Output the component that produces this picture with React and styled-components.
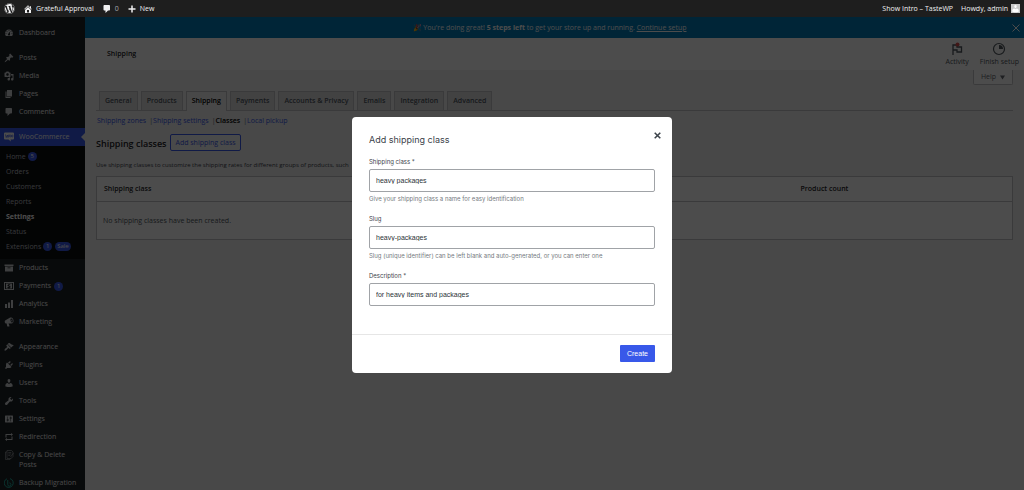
import React from 'react';
import styled, { createGlobalStyle } from 'styled-components';
import { FaWordpress } from 'react-icons/fa';

const GlobalStyle = createGlobalStyle`
  *, *::before, *::after { box-sizing: border-box; }
  body {
    margin: 0;
    overflow: hidden;
    background: #f0f0f1;
    color: #1d2327;
    font: 7px/10px "Open Sans", "Noto Sans", sans-serif;
  }
  button, input { font: inherit; margin: 0; }
  a { color: inherit; text-decoration: none; }
  h1, h2, p, ul { margin: 0; padding: 0; }
  ul { list-style: none; }
`;

const PATHS = {
  dashboard: 'M3.76 16h12.48c1.1-1.37 1.76-3.11 1.76-5 0-4.42-3.58-8-8-8s-8 3.58-8 8c0 1.89.66 3.63 1.76 5zM10 4c.55 0 1 .45 1 1s-.45 1-1 1-1-.45-1-1 .45-1 1-1zM6 6c.55 0 1 .45 1 1s-.45 1-1 1-1-.45-1-1 .45-1 1-1zm8 0c.55 0 1 .45 1 1s-.45 1-1 1-1-.45-1-1 .45-1 1-1zm-5.37 5.55L12 7v6c0 1.1-.9 2-2 2s-2-.9-2-2c0-.57.24-1.08.63-1.45zM4 10c.55 0 1 .45 1 1s-.45 1-1 1-1-.45-1-1 .45-1 1-1zm12 0c.55 0 1 .45 1 1s-.45 1-1 1-1-.45-1-1 .45-1 1-1z',
  pin: 'M10.44 3.02l1.82-1.82 6.36 6.35-1.83 1.82c-1.05-.68-2.48-.57-3.41.36l-.75.75c-.92.93-1.04 2.35-.35 3.41l-1.83 1.82-2.41-2.41-2.8 2.79c-.42.42-3.38 2.71-3.8 2.29s1.86-3.39 2.28-3.81l2.79-2.79L4.1 9.36l1.83-1.82c1.05.69 2.48.57 3.4-.36l.75-.75c.93-.92 1.05-2.35.36-3.41z',
  media: 'M13 11V4c0-.55-.45-1-1-1h-1.67L9 1H5L3.67 3H2c-.55 0-1 .45-1 1v7c0 .55.45 1 1 1h10c.55 0 1-.45 1-1zM7 4.5c1.38 0 2.5 1.12 2.5 2.5S8.38 9.5 7 9.5 4.5 8.38 4.5 7 5.62 4.5 7 4.5zM14 6h5v10.5c0 1.38-1.12 2.5-2.5 2.5S14 17.88 14 16.5s1.12-2.5 2.5-2.5c.17 0 .34.02.5.05V9h-3V6zm-4 8.05V13h2v3.5c0 1.38-1.12 2.5-2.5 2.5S7 17.88 7 16.5 8.12 14 9.5 14c.17 0 .34.02.5.05z',
  page: 'M6 15V2h10v13H6zm-1 1h8v2H3V5h2v11z',
  comment: 'M5 2h9c1.1 0 2 .9 2 2v7c0 1.1-.9 2-2 2h-2l-5 5v-5H5c-1.1 0-2-.9-2-2V4c0-1.1.9-2 2-2z',
  archive: 'M19 3v3H1V3h18zM2 7h16v10H2V7zm11 3.500V9H7v1.500h6z',
  payments: 'M0 2h20v16H0V2zm2 2v12h16V4H2zM4 5h12v10H4V5zm5 1v1c-3 .5-3 3.500 0 4 1.500.3 1.500 1.200 0 1.200H7V14h2v.8h2V14c3-.5 3-3.600 0-4-1.500-.3-1.500-1.300 0-1.300h1.500V7H11V6H9z',
  bars: 'M18 18V2h-4v16h4zm-6 0V7H8v11h4zm-6 0v-8H2v8h4z',
  megaphone: 'M14 1c3 0 5 3 5 6.500S17.500 13 15 13H9l2 5c0 .5-.3.800-.7.800H7c-.4 0-.6-.3-.7-.7L5.400 13C2.800 13.300 1.500 11 1.500 9.300S2.200 7 3 6.500l8.500-5C12.300 1.100 13 1 14 1zm1 1.800c-2 .2-2.400 2.500-1.800 4.600S15.500 11.500 16.500 11c1.300-.6 1.500-2.600 1-4.600S16 2.700 15 2.800zm-.6 2.700c.9-.2 1.800.5 2 1.400.3.900-.1 1.800-1 2z',
  brush: 'M14.48 11.06L7.41 3.99l1.5-1.5c.5-.56 2.3-.47 3.51.32 1.21.8 1.43 1.28 2.91 2.1 1.18.64 2.45 1.26 4.45.85zm-.71.71L6.7 4.7 4.93 6.47c-.39.39-.39 1.02 0 1.41l1.06 1.06c.39.39.39 1.03 0 1.42-.6.6-1.43 1.11-2.21 1.69-.35.26-.7.53-1.01.84C1.43 14.23.4 16.08 1.4 17.07c.99 1 2.84-.03 4.18-1.36.31-.31.58-.66.85-1.02.57-.78 1.08-1.61 1.69-2.21.39-.39 1.02-.39 1.41 0l1.06 1.06c.39.39 1.02.39 1.41 0z',
  plug: 'M13.11 4.36L9.87 7.6 8 5.73l3.24-3.24c.35-.34 1.05-.2 1.56.32.52.51.66 1.21.31 1.55zm-8 1.77l.91-1.12 9.01 9.01-1.19.84c-.71.71-2.63 1.16-3.82 1.16H6.14L4.9 17.26c-.59.59-1.54.59-2.12 0-.59-.58-.59-1.53 0-2.12l1.24-1.24v-3.88c0-1.13.4-3.19 1.09-3.89zm7.26 3.97l3.24-3.24c.34-.35 1.04-.21 1.55.31.52.51.66 1.21.31 1.55l-3.24 3.25z',
  user: 'M10 9.25c-2.27 0-2.73-3.44-2.73-3.44C7 4.02 7.82 2 9.97 2c2.16 0 2.98 2.02 2.71 3.81 0 0-.41 3.44-2.68 3.44zm0 2.57L12.72 10c2.39 0 4.52 2.33 4.52 4.53v2.49s-3.65 1.13-7.24 1.13c-3.65 0-7.24-1.13-7.24-1.13v-2.49c0-2.25 1.94-4.48 4.47-4.48z',
  wrench: 'M16.68 9.77c-1.34 1.34-3.3 1.67-4.95.99l-5.41 6.52c-.99.99-2.59.99-3.58 0s-.99-2.59 0-3.57l6.52-5.42c-.68-1.65-.35-3.61.99-4.95 1.28-1.28 3.12-1.62 4.72-1.06l-2.89 2.89 2.82 2.82 2.86-2.87c.53 1.58.18 3.39-1.08 4.65z',
  sliders: 'M18 16V4c0-.55-.45-1-1-1H3c-.55 0-1 .45-1 1v12c0 .55.45 1 1 1h14c.55 0 1-.45 1-1zM8 11h1c.55 0 1 .45 1 1s-.45 1-1 1H8v1.500c0 .28-.22.500-.5.500s-.5-.22-.5-.5V13H6c-.55 0-1-.45-1-1s.45-1 1-1h1V5.500c0-.28.22-.5.500-.5s.5.220.5.500V11zm5-2h-1c-.55 0-1-.45-1-1s.45-1 1-1h1V5.500c0-.28.22-.5.500-.5s.5.220.5.500V7h1c.55 0 1 .45 1 1s-.45 1-1 1h-1v5.500c0 .28-.22.500-.5.500s-.5-.22-.5-.5V9z',
  loop: 'M5 4h9V2l4 3-4 3V6H5v5H3V4h2zm12 12H6v2l-4-3 4-3v2h9V9h2v7z',
  home: 'M16 8.5l1.53 1.53-1.06 1.06L10 4.6l-6.47 6.49-1.06-1.06L10 2.5l4 4v-2h2v4zm-6-2.46l6 5.99V18H4v-5.97zM12 17v-5H8v5h4z',
  plus: 'M17 8.5v3h-5.500V17h-3v-5.500H3v-3h5.500V3h3v5.500H17z',
};

const Svg = styled.svg`
  display: block;
  flex: none;
  width: 10px;
  height: 10px;
  fill: currentColor;
`;

function Icon({ name }) {
  if (name === 'woo') {
    return (
      <Svg viewBox="0 0 20 20" aria-hidden="true">
        <path d="M2 1h16q2 0 2 2v10q0 2-2 2h-5l1 4-5-4H2q-2 0-2-2V3q0-2 2-2z" />
        <path d="M3 5l1.500 6L7 6l1 5 2-6" fill="none" stroke="#3858e9" strokeWidth="1.400" />
        <circle cx="12.500" cy="8" r="1.800" fill="none" stroke="#3858e9" strokeWidth="1.300" />
        <circle cx="16.500" cy="8" r="1.800" fill="none" stroke="#3858e9" strokeWidth="1.300" />
      </Svg>
    );
  }
  if (name === 'copy') {
    return (
      <Svg viewBox="0 0 20 20" aria-hidden="true">
        <g fill="none" stroke="currentColor" strokeWidth="1.200" opacity=".8">
          <path d="M6 4V1h9l3 3v9l-4 4H6V4z" />
          <path d="M6 4H3v15h9l2-2M8.500 5h6M8.500 8h6M8.500 11h4" />
          <path d="M19 6l-6 8" />
        </g>
      </Svg>
    );
  }
  if (name === 'backup') {
    return (
      <Svg viewBox="0 0 20 20" aria-hidden="true">
        <g fill="none" stroke="#1fa89a" strokeWidth="2">
          <path d="M6 1.500A9 9 0 1 0 12 1.200" />
          <path d="M7.500 4v9a3.200 3.200 0 1 0 3.200-3.200" />
        </g>
      </Svg>
    );
  }
  return (
    <Svg viewBox="0 0 20 20" aria-hidden="true">
      <path fillRule="evenodd" d={PATHS[name]} />
    </Svg>
  );
}

const TopBar = styled.header`
  position: relative;
  z-index: 20;
  display: flex;
  align-items: center;
  height: 17px;
  padding: 0 4px;
  gap: 8px;
  background: #1e1e1e;
  color: #f0f0f1;
`;
const TopLink = styled.a`
  display: flex;
  align-items: center;
  gap: 3px;
  color: ${(p) => (p.$dim ? '#a7aaad' : 'inherit')};
  svg { color: #f0f0f1; }
`;
const WpLogo = styled(FaWordpress)`
  display: block;
  width: 11px;
  height: 11px;
`;
const TopRight = styled.div`
  display: flex;
  align-items: center;
  gap: 8px;
  margin-left: auto;
`;
const Avatar = styled.span`
  width: 9px;
  height: 9px;
  background: #c9c9c9;
  color: #ffffff;
  svg { width: 9px; height: 9px; color: #ffffff; }
`;

const Shell = styled.div`
  display: flex;
  min-height: calc(100vh - 17px);
`;
const Sidebar = styled.nav`
  flex: none;
  width: 85px;
  padding-top: 7px;
  background: #1d2327;
  color: #f0f0f1;
`;
const MenuGroup = styled.ul`
  margin-bottom: 7px;
`;
const MenuLink = styled.a`
  position: relative;
  display: flex;
  align-items: flex-start;
  gap: 5px;
  min-height: 18px;
  padding: 4px 6px 4px 4px;
  color: ${(p) => (p.$active ? '#ffffff' : '#f0f0f1')};
  background: ${(p) => (p.$active ? '#3858e9' : 'transparent')};
  svg { color: ${(p) => (p.$active ? '#ffffff' : '#d0d3d6')}; }
  &::after {
    content: '';
    display: ${(p) => (p.$active ? 'block' : 'none')};
    position: absolute;
    right: 0;
    top: 5px;
    border: 4px solid transparent;
    border-left-width: 0;
    border-right-color: #f0f0f1;
  }
`;
const MenuText = styled.span`
  display: flex;
  align-items: center;
  gap: 3px;
`;
const SubMenu = styled.ul`
  padding: 3px 0 5px;
  background: #0c0e10;
`;
const SubLink = styled.a`
  display: flex;
  align-items: center;
  gap: 2px;
  height: 15px;
  padding-left: 6px;
  color: ${(p) => (p.$current ? '#ffffff' : '#b9bdc1')};
  font-weight: ${(p) => (p.$current ? 700 : 400)};
`;
const Badge = styled.span`
  min-width: 9px;
  height: 9px;
  padding: 0 2px;
  border-radius: 5px;
  background: #3858e9;
  color: #ffffff;
  font-size: 6px;
  line-height: 9px;
  text-align: center;
  & + & { margin-left: 1px; }
`;

const Main = styled.main`
  flex: 1;
  min-width: 0;
`;
const Banner = styled.div`
  display: flex;
  align-items: center;
  height: 21px;
  padding: 0 3px;
  background: #007cba;
  color: #ffffff;
  p { flex: 1; text-align: center; }
  a { text-decoration: underline; }
`;
const IconButton = styled.button`
  display: flex;
  padding: 0;
  border: 0;
  background: none;
  color: inherit;
`;
const PageHeader = styled.div`
  display: flex;
  align-items: center;
  height: 32px;
  padding: 0 5px 0 22px;
  background: #ffffff;
`;
const PageName = styled.h1`
  flex: 1;
  font-size: 7px;
  font-weight: 600;
`;
const HeaderAction = styled.button`
  display: flex;
  flex-direction: column;
  align-items: center;
  gap: 1px;
  margin-left: 11px;
  padding: 0;
  border: 0;
  background: none;
  color: #50575e;
  svg { width: 14px; height: 14px; }
`;
const HelpRow = styled.div`
  display: flex;
  justify-content: flex-end;
  height: 21px;
  padding-right: 11px;
`;
const HelpButton = styled.button`
  display: flex;
  align-items: center;
  justify-content: center;
  gap: 4px;
  width: 40px;
  height: 15px;
  padding: 0;
  border: 1px solid #c3c4c7;
  border-top: 0;
  border-radius: 0 0 2px 2px;
  background: #ffffff;
  color: #646970;
  svg { width: 5px; height: 5px; }
`;
const Tabs = styled.nav`
  display: flex;
  gap: 3px;
  margin: 0 11px;
  padding-left: 3px;
  border-bottom: 1px solid #c3c4c7;
`;
const Tab = styled.a`
  height: ${(p) => (p.$active ? 20 : 19)}px;
  margin-bottom: ${(p) => (p.$active ? -1 : 0)}px;
  padding: 4px 5px;
  border: 1px solid #c3c4c7;
  border-bottom: 0;
  background: ${(p) => (p.$active ? '#f0f0f1' : '#dcdcde')};
  color: ${(p) => (p.$active ? '#000000' : '#50575e')};
  font-weight: 600;
`;
const Content = styled.section`
  padding: 5px 11px;
`;
const SectionLinks = styled.ul`
  display: flex;
  gap: 3px;
  padding-left: 1px;
  li + li::before { content: '|'; color: #646970; }
`;
const SectionLink = styled.a`
  color: ${(p) => (p.$current ? '#000000' : '#3858e9')};
  font-weight: ${(p) => (p.$current ? 600 : 400)};
`;
const TitleRow = styled.div`
  display: flex;
  align-items: flex-end;
  gap: 4px;
  margin-top: 8px;
`;
const SectionTitle = styled.h2`
  font-size: 9px;
  font-weight: 600;
  line-height: 14px;
`;
const OutlineButton = styled.button`
  height: 17px;
  padding: 0 4px;
  border: 1px solid #3858e9;
  border-radius: 2px;
  background: #f6f7f7;
  color: #3858e9;
  line-height: 15px;
`;
const Intro = styled.p`
  margin: 9px 0 6px;
  color: #3c434a;
  font-size: 6px;
`;
const Table = styled.table`
  width: 100%;
  border: 1px solid #c3c4c7;
  border-spacing: 0;
  background: #ffffff;
  th {
    height: 25px;
    padding: 0 7px;
    border-bottom: 1px solid #c3c4c7;
    font-weight: 600;
    text-align: left;
  }
  th + th { width: 41%; text-align: center; }
  td {
    height: 37px;
    padding: 0 6px;
    color: #50575e;
  }
`;

const Backdrop = styled.div`
  position: fixed;
  inset: 0;
  z-index: 10;
  display: flex;
  align-items: center;
  justify-content: center;
  background: rgba(0, 0, 0, 0.7);
`;
const Dialog = styled.form`
  width: 320px;
  border-radius: 4px;
  background: #ffffff;
  color: #3c434a;
  font-family: "Liberation Sans", Arial, sans-serif;
`;
const DialogHeader = styled.div`
  display: flex;
  align-items: flex-start;
  justify-content: space-between;
  padding: 15px 11px 0 17px;
  svg { width: 7px; height: 7px; }
`;
const DialogTitle = styled.h2`
  font-family: Inter, sans-serif;
  font-size: 9px;
  font-weight: 400;
  line-height: 16px;
`;
const Fields = styled.div`
  display: flex;
  flex-direction: column;
  gap: 12px;
  padding: 10px 17px 25px;
`;
const Field = styled.div`
  display: flex;
  flex-direction: column;
  label, small {
    font-family: Inter, sans-serif;
    font-size: 6px;
    line-height: 8px;
  }
  input {
    height: 23px;
    margin: 3px 0;
    padding: 0 6px;
    border: 1px solid #a0a3a7;
    border-radius: 2px;
    background: #ffffff;
    color: #2c3338;
    font-size: 7px;
  }
  small { color: #757a80; }
`;
const DialogFooter = styled.div`
  display: flex;
  justify-content: flex-end;
  padding: 10px 17px 11px;
  border-top: 1px solid #e6e6e6;
`;
const PrimaryButton = styled.button`
  width: 35px;
  height: 17px;
  padding: 0;
  border: 0;
  border-radius: 1px;
  background: #3858e9;
  color: #ffffff;
`;

const MENU_TOP = [
  [{ icon: 'dashboard', text: 'Dashboard' }],
  [
    { icon: 'pin', text: 'Posts' },
    { icon: 'media', text: 'Media' },
    { icon: 'page', text: 'Pages' },
    { icon: 'comment', text: 'Comments' },
  ],
  [
    {
      icon: 'woo',
      text: 'WooCommerce',
      active: true,
      children: [
        { text: 'Home', badges: ['5'] },
        { text: 'Orders' },
        { text: 'Customers' },
        { text: 'Reports' },
        { text: 'Settings', current: true },
        { text: 'Status' },
        { text: 'Extensions', badges: ['1', 'Sale'] },
      ],
    },
    { icon: 'archive', text: 'Products' },
    { icon: 'payments', text: 'Payments', badge: '1' },
    { icon: 'bars', text: 'Analytics' },
    { icon: 'megaphone', text: 'Marketing' },
  ],
  [
    { icon: 'brush', text: 'Appearance' },
    { icon: 'plug', text: 'Plugins' },
    { icon: 'user', text: 'Users' },
    { icon: 'wrench', text: 'Tools' },
    { icon: 'sliders', text: 'Settings' },
    { icon: 'loop', text: 'Redirection' },
    { icon: 'copy', text: 'Copy & Delete Posts' },
    { icon: 'backup', text: 'Backup Migration' },
  ],
];

const TABS = ['General', 'Products', 'Shipping', 'Payments', 'Accounts & Privacy', 'Emails', 'Integration', 'Advanced'];
const SECTIONS = ['Shipping zones', 'Shipping settings', 'Classes', 'Local pickup'];

const FIELDS = [
  { id: 'class-name', label: 'Shipping class *', value: 'heavy packages', help: 'Give your shipping class a name for easy identification' },
  { id: 'class-slug', label: 'Slug', value: 'heavy-packages', help: 'Slug (unique identifier) can be left blank and auto-generated, or you can enter one' },
  { id: 'class-description', label: 'Description *', value: 'for heavy items and packages' },
];

function MenuItem({ item }) {
  return (
    <li>
      <MenuLink href="#" $active={item.active}>
        <Icon name={item.icon} />
        <MenuText>
          {item.text}
          {item.badge && <Badge>{item.badge}</Badge>}
        </MenuText>
      </MenuLink>
      {item.children && (
        <SubMenu>
          {item.children.map((sub) => (
            <li key={sub.text}>
              <SubLink href="#" $current={sub.current}>
                {sub.text}
                {sub.badges?.map((b) => <Badge key={b}>{b}</Badge>)}
              </SubLink>
            </li>
          ))}
        </SubMenu>
      )}
    </li>
  );
}

export default function App() {
  return (
    <>
      <GlobalStyle />
      <TopBar>
        <TopLink href="#" aria-label="WordPress"><WpLogo /></TopLink>
        <TopLink href="#"><Icon name="home" />Grateful Approval</TopLink>
        <TopLink href="#" $dim><Icon name="comment" />0</TopLink>
        <TopLink href="#"><Icon name="plus" />New</TopLink>
        <TopRight>
          <TopLink href="#">Show Intro – TasteWP</TopLink>
          <TopLink href="#">Howdy, admin <Avatar><Icon name="user" /></Avatar></TopLink>
        </TopRight>
      </TopBar>

      <Shell>
        <Sidebar aria-label="Admin menu">
          {MENU_TOP.map((group) => (
            <MenuGroup key={group[0].text}>
              {group.map((item) => <MenuItem key={item.text} item={item} />)}
            </MenuGroup>
          ))}
        </Sidebar>

        <Main>
          <Banner>
            <p>🎉 You're doing great! <b>5 steps left</b> to get your store up and running. <a href="#">Continue setup</a></p>
            <IconButton type="button" aria-label="Dismiss">
              <Svg viewBox="0 0 20 20"><path d="M3 3l14 14M17 3L3 17" stroke="currentColor" strokeWidth="2" /></Svg>
            </IconButton>
          </Banner>
          <PageHeader>
            <PageName>Shipping</PageName>
            <HeaderAction type="button">
              <Svg viewBox="0 0 14 14">
                <path d="M3 13V3h4v2h4.500v5H7V8H3" fill="none" stroke="currentColor" strokeWidth="1.300" />
                <circle cx="7.500" cy="2.500" r="2" fill="#d94f4f" />
              </Svg>
              Activity
            </HeaderAction>
            <HeaderAction type="button">
              <Svg viewBox="0 0 14 14">
                <circle cx="7" cy="7" r="5.500" fill="none" stroke="currentColor" strokeWidth="1.200" />
                <path d="M7 3a4 4 0 0 1 4 4H7z" />
              </Svg>
              Finish setup
            </HeaderAction>
          </PageHeader>
          <HelpRow>
            <HelpButton type="button">
              Help
              <Svg viewBox="0 0 10 10"><path d="M0 1h10L5 9z" /></Svg>
            </HelpButton>
          </HelpRow>
          <Tabs aria-label="Settings">
            {TABS.map((t) => <Tab key={t} href="#" $active={t === 'Shipping'}>{t}</Tab>)}
          </Tabs>
          <Content>
            <SectionLinks>
              {SECTIONS.map((s) => (
                <li key={s}><SectionLink href="#" $current={s === 'Classes'}>{s}</SectionLink></li>
              ))}
            </SectionLinks>
            <TitleRow>
              <SectionTitle>Shipping classes</SectionTitle>
              <OutlineButton type="button">Add shipping class</OutlineButton>
            </TitleRow>
            <Intro>Use shipping classes to customize the shipping rates for different groups of products, such</Intro>
            <Table>
              <thead>
                <tr><th scope="col">Shipping class</th><th scope="col">Product count</th></tr>
              </thead>
              <tbody>
                <tr><td colSpan={2}>No shipping classes have been created.</td></tr>
              </tbody>
            </Table>
          </Content>
        </Main>
      </Shell>

      <Backdrop>
        <Dialog role="dialog" aria-labelledby="dialog-title" onSubmit={(e) => e.preventDefault()}>
          <DialogHeader>
            <DialogTitle id="dialog-title">Add shipping class</DialogTitle>
            <IconButton type="button" aria-label="Close">
              <Svg viewBox="0 0 10 10"><path d="M1 1l8 8M9 1L1 9" stroke="currentColor" strokeWidth="2.200" /></Svg>
            </IconButton>
          </DialogHeader>
          <Fields>
            {FIELDS.map((f) => (
              <Field key={f.id}>
                <label htmlFor={f.id}>{f.label}</label>
                <input id={f.id} type="text" defaultValue={f.value} />
                {f.help && <small>{f.help}</small>}
              </Field>
            ))}
          </Fields>
          <DialogFooter>
            <PrimaryButton type="submit">Create</PrimaryButton>
          </DialogFooter>
        </Dialog>
      </Backdrop>
    </>
  );
}
